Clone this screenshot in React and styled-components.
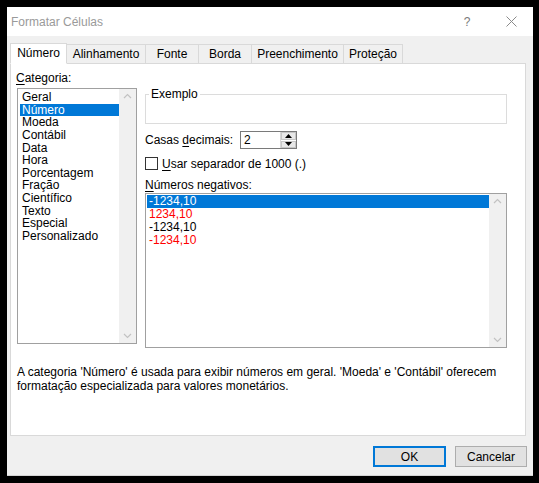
import React from "react";
import styled, { createGlobalStyle } from "styled-components";

const Global = createGlobalStyle`
  html, body { margin: 0; padding: 0; background: #000; }
  body { width: 539px; height: 483px; overflow: hidden; font-family: "Segoe UI", "Liberation Sans", Arial, sans-serif; font-size: 12px; color: #000; }
`;

const Dialog = styled.div`
  margin: 7px 0 0 7px;
  width: 526px;
  height: 469px;
  background: #f0f0f0;
  box-sizing: border-box;
  border-bottom: 1px solid #d4d4d4;
  display: flex;
  flex-direction: column;
`;

const TitleBar = styled.div`
  height: 29px;
  background: #fff;
  display: flex;
  align-items: center;
  padding-left: 4px;
  flex-shrink: 0;
`;

const Title = styled.div`
  flex: 1;
  color: #9a9a9a;
  font-size: 12px;
`;

const TitleBtn = styled.div`
  width: 44px;
  height: 29px;
  display: flex;
  align-items: center;
  justify-content: center;
  color: #7a7a7a;
  font-size: 12px;
`;

const Body = styled.div`
  padding: 6px 7px 0 3px;
  display: flex;
  flex-direction: column;
`;

const TabBar = styled.div`
  display: flex;
  align-items: flex-end;
  height: 21px;
  position: relative;
  z-index: 1;
`;

const Tab = styled.div`
  width: ${p => p.$w}px;
  height: ${p => (p.$active ? 21 : 19)}px;
  box-sizing: border-box;
  border: 1px solid #d9d9d9;
  border-bottom: ${p => (p.$active ? "1px solid #fff" : "none")};
  margin-left: ${p => (p.$first ? 0 : -1)}px;
  margin-bottom: ${p => (p.$active ? -1 : 0)}px;
  background: ${p => (p.$active ? "#fff" : "#f0f0f0")};
  display: flex;
  align-items: center;
  justify-content: center;
  padding-bottom: ${p => (p.$active ? 2 : 0)}px;
  white-space: nowrap;
`;

const Panel = styled.div`
  height: 373px;
  box-sizing: border-box;
  background: #fff;
  border: 1px solid #d9d9d9;
  padding: 7px 0 0 5px;
  display: flex;
  flex-direction: column;
`;

const Columns = styled.div`
  display: grid;
  grid-template-columns: 120px 362px;
  column-gap: 8px;
  padding-left: 1px;
`;

const LeftCol = styled.div`
  display: flex;
  flex-direction: column;
`;

const RightCol = styled.div`
  display: flex;
  flex-direction: column;
  padding-top: 17px;
`;

const Label = styled.div`
  line-height: 14px;
  height: 14px;
  margin-left: ${p => p.$ml || 0}px;
  margin-right: ${p => p.$mr || 0}px;
  flex-shrink: 0;
  white-space: nowrap;
`;

const U = styled.span`
  text-decoration: underline;
  text-underline-offset: 2px;
`;

const ListBox = styled.div`
  height: ${p => p.$h}px;
  box-sizing: border-box;
  border: 1px solid ${p => p.$border || "#a0a0a0"};
  display: flex;
  background: #fff;
  margin-top: ${p => p.$mt || 0}px;
`;

const ListItems = styled.div`
  flex: 1;
  padding: ${p => p.$pad};
`;

const Item = styled.div`
  height: ${p => p.$h}px;
  line-height: ${p => p.$h}px;
  padding-left: 2px;
  background: ${p => (p.$sel ? "#0078d7" : "transparent")};
  color: ${p => (p.$sel ? "#fff" : p.$red ? "#ff0000" : "#000")};
  white-space: nowrap;
`;

const ScrollBar = styled.div`
  width: 17px;
  background: #f0f0f0;
  display: flex;
  flex-direction: column;
  justify-content: space-between;
  align-items: center;
  padding: 4px 0;
`;

const Chevron = ({ down }) => (
  <svg width="9" height="6" viewBox="0 0 9 6">
    <path
      d={down ? "M1 1 L4.5 4.5 L8 1" : "M1 5 L4.5 1.5 L8 5"}
      fill="none"
      stroke="#c2c2c2"
      strokeWidth="1.2"
    />
  </svg>
);

const GroupBox = styled.fieldset`
  margin: 0;
  padding: 0;
  height: 36px;
  box-sizing: border-box;
  border: 1px solid #dcdcdc;
`;

const Legend = styled.legend`
  margin-left: 3px;
  padding: 0 2px;
  line-height: 12px;
  font-size: 12px;
`;

const Row = styled.div`
  display: flex;
  align-items: center;
  margin-top: ${p => p.$mt || 0}px;
  height: ${p => p.$h}px;
`;

const Spinner = styled.div`
  width: 57px;
  height: 18px;
  box-sizing: border-box;
  border: 1px solid #7a7a7a;
  display: flex;
  background: #fff;
`;

const SpinValue = styled.div`
  flex: 1;
  padding-left: 3px;
  line-height: 16px;
`;

const SpinButtons = styled.div`
  width: 15px;
  display: flex;
  flex-direction: column;
  border-left: 1px solid #d6d6d6;
`;

const SpinBtn = styled.div`
  flex: 1;
  background: #e8e8e8;
  border: 1px solid #c6c6c6;
  margin: 0 0 ${p => (p.$top ? 1 : 0)}px 0;
  display: flex;
  align-items: center;
  justify-content: center;
`;

const Tri = ({ down }) => (
  <svg width="7" height="4" viewBox="0 0 7 4">
    <path d={down ? "M0 0 L7 0 L3.5 4 Z" : "M0 4 L7 4 L3.5 0 Z"} fill="#000" />
  </svg>
);

const Checkbox = styled.div`
  width: 13px;
  height: 13px;
  box-sizing: border-box;
  border: 1px solid #333;
  background: #fff;
  margin-right: 4px;
`;

const Description = styled.div`
  margin-top: 17px;
  line-height: 14px;
  padding-left: 1px;
`;

const Footer = styled.div`
  display: flex;
  justify-content: flex-end;
  gap: 9px;
  padding-top: 10px;
  margin-right: -1px;
`;

const Button = styled.div`
  width: ${p => p.$w}px;
  height: 21px;
  box-sizing: border-box;
  background: #e1e1e1;
  border: ${p => (p.$default ? "2px solid #0078d7" : "1px solid #adadad")};
  display: flex;
  align-items: center;
  justify-content: center;
`;

const tabs = [
  ["Número", 57],
  ["Alinhamento", 80],
  ["Fonte", 54],
  ["Borda", 54],
  ["Preenchimento", 93],
  ["Proteção", 60],
];

const categories = [
  "Geral",
  "Número",
  "Moeda",
  "Contábil",
  "Data",
  "Hora",
  "Porcentagem",
  "Fração",
  "Científico",
  "Texto",
  "Especial",
  "Personalizado",
];

const negatives = [
  { t: "-1234,10", sel: true },
  { t: "1234,10", red: true },
  { t: "-1234,10" },
  { t: "-1234,10", red: true },
];

export default function App() {
  return (
    <>
      <Global />
      <Dialog>
        <TitleBar>
          <Title>Formatar Células</Title>
          <TitleBtn>?</TitleBtn>
          <TitleBtn>
            <svg width="11" height="11" viewBox="0 0 11 11">
              <path d="M0.5 0.5 L10.5 10.5 M10.5 0.5 L0.5 10.5" stroke="#8a8a8a" strokeWidth="1" />
            </svg>
          </TitleBtn>
        </TitleBar>
        <Body>
          <TabBar>
            {tabs.map(([name, w], i) => (
              <Tab key={name} $w={w} $active={i === 0} $first={i === 0}>
                {name}
              </Tab>
            ))}
          </TabBar>
          <Panel>
            <Columns>
              <LeftCol>
                <Label $ml={-1}>
                  <U>C</U>ategoria:
                </Label>
                <ListBox $h={256} $mt={3} $border="#a0a0a0">
                  <ListItems $pad="2px 0 0 2px">
                    {categories.map((c, i) => (
                      <Item key={c} $h={12.65} $sel={i === 1}>
                        {c}
                      </Item>
                    ))}
                  </ListItems>
                  <ScrollBar>
                    <Chevron />
                    <Chevron down />
                  </ScrollBar>
                </ListBox>
              </LeftCol>
              <RightCol>
                <GroupBox>
                  <Legend>Exemplo</Legend>
                </GroupBox>
                <Row $mt={7} $h={18}>
                  <Label $mr={7}>
                    Casas <U>d</U>ecimais:
                  </Label>
                  <Spinner>
                    <SpinValue>2</SpinValue>
                    <SpinButtons>
                      <SpinBtn $top>
                        <Tri />
                      </SpinBtn>
                      <SpinBtn>
                        <Tri down />
                      </SpinBtn>
                    </SpinButtons>
                  </Spinner>
                </Row>
                <Row $mt={8} $h={13}>
                  <Checkbox />
                  <Label>
                    <U>U</U>sar separador de 1000 (.)
                  </Label>
                </Row>
                <Row $mt={8} $h={14}>
                  <Label>
                    <U>N</U>úmeros negativos:
                  </Label>
                </Row>
                <ListBox $h={155} $mt={1} $border="#a0a0a0">
                  <ListItems $pad="1px 0 0 1px">
                    {negatives.map((n, i) => (
                      <Item key={i} $h={13} $sel={n.sel} $red={n.red}>
                        {n.t}
                      </Item>
                    ))}
                  </ListItems>
                  <ScrollBar>
                    <Chevron />
                    <Chevron down />
                  </ScrollBar>
                </ListBox>
              </RightCol>
            </Columns>
            <Description>
              A categoria 'Número' é usada para exibir números em geral. 'Moeda' e 'Contábil' oferecem
              <br />
              formatação especializada para valores monetários.
            </Description>
          </Panel>
          <Footer>
            <Button $w={73} $default>
              OK
            </Button>
            <Button $w={72}>Cancelar</Button>
          </Footer>
        </Body>
      </Dialog>
    </>
  );
}
